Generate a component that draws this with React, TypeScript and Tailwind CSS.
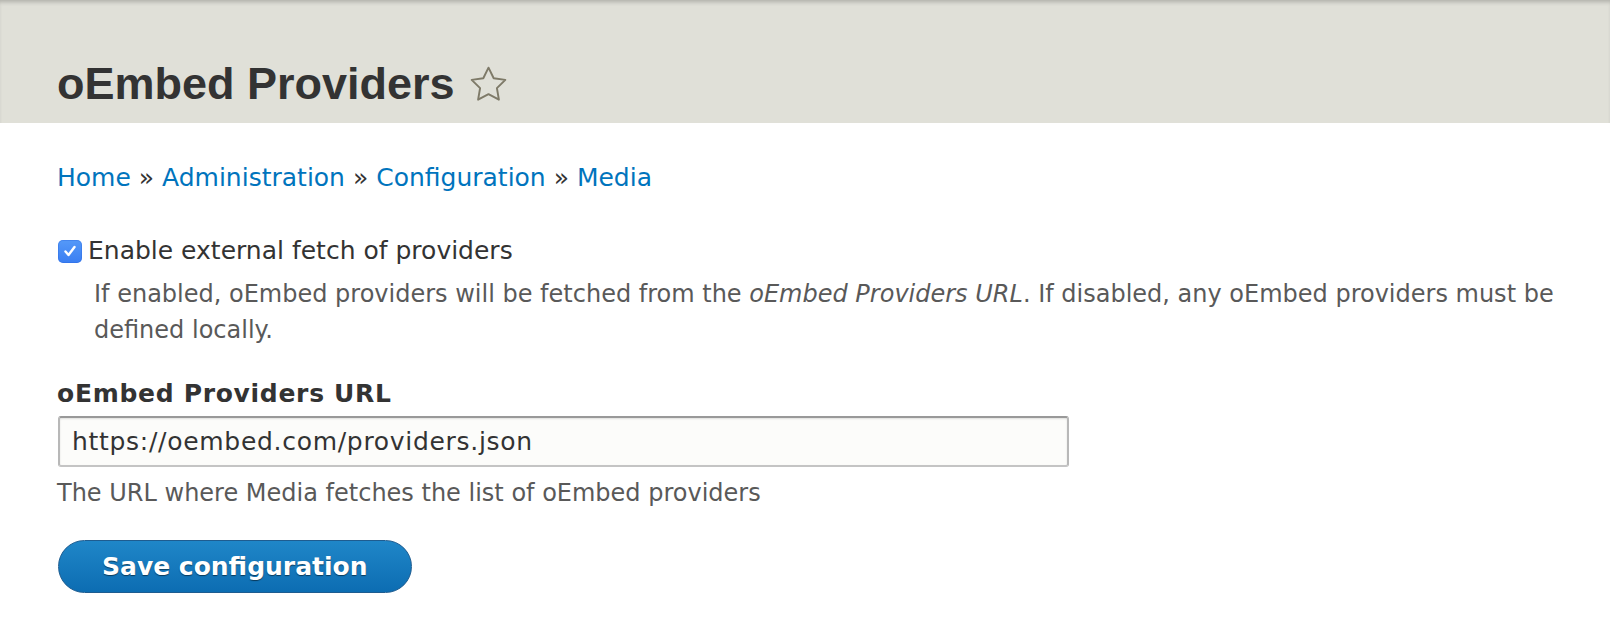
import React from "react";

export default function App() {
  return (
    <div className="min-h-screen bg-white font-['DejaVu_Sans',sans-serif] text-[#333]">
      <header className="h-[123px] bg-[#e0e0d8] pl-[57px] pt-[58px] shadow-[inset_0_4px_4px_-2px_rgba(0,0,0,0.22)]">
        <div className="flex h-[52px] items-center">
          <h1 className="font-['Liberation_Sans',sans-serif] text-[45px] font-bold leading-[52px] text-[#333]">
            oEmbed Providers
          </h1>
          <svg
            className="ml-[15px] mt-[1px]"
            width="37"
            height="37"
            viewBox="1 1 22 22"
            fill="none"
            stroke="#7e7a68"
            strokeWidth="1.15"
            strokeLinejoin="round"
          >
            <path d="M12 2l3.09 6.26L22 9.27l-5 4.87 1.18 6.88L12 17.77l-6.18 3.25L7 14.14 2 9.27l6.91-1.01L12 2z" />
          </svg>
        </div>
      </header>

      <main className="pl-[57px] pr-[57px] pt-[37px] text-[25px] leading-[36px]">
        <nav className="h-[36px] whitespace-nowrap">
          <a className="text-[#0074bd]" href="#">Home</a>
          <span className="text-[#333]"> » </span>
          <a className="text-[#0074bd]" href="#">Administration</a>
          <span className="text-[#333]"> » </span>
          <a className="text-[#0074bd]" href="#">Configuration</a>
          <span className="text-[#333]"> » </span>
          <a className="text-[#0074bd]" href="#">Media</a>
        </nav>

        <div className="mt-[37px]">
          <div className="flex h-[36px] items-center">
            <div className="ml-[1px] flex h-[23px] w-[24px] items-center justify-center rounded-[5px] bg-gradient-to-b from-[#5599f8] to-[#3a7ef2] shadow-[inset_0_0_0_1px_rgba(40,100,220,0.35)]">
              <svg width="16" height="16" viewBox="0 0 16 16" fill="none" stroke="white" strokeWidth="2.4" strokeLinecap="round" strokeLinejoin="round">
                <path d="M3.5 8.5l3 3.5L12.5 4" />
              </svg>
            </div>
            <label className="ml-[6px] text-[#333]">Enable external fetch of providers</label>
          </div>
          <div className="mt-[7px] pl-[37px] text-[24px] text-[#595959]">
            <span className="block whitespace-nowrap">
              If enabled, oEmbed providers will be fetched from the <em>oEmbed Providers URL</em>. If disabled, any oEmbed providers must be
            </span>
            <span className="block">defined locally.</span>
          </div>
        </div>

        <div className="mt-[28px]">
          <div className="font-bold tracking-[0.7px] text-[#333]">oEmbed Providers URL</div>
          <input
            readOnly
            value="https://oembed.com/providers.json"
            className="ml-[1px] mt-[4px] box-border block h-[51px] w-[1011px] rounded-[3px] border-[2px] border-[#b8b8b8] border-t-[#999] border-b-[#c4c4c4] bg-[#fcfcfa] pb-[9px] pl-[12px] pt-[9px] font-['DejaVu_Sans',sans-serif] text-[25px] leading-[29px] tracking-[0.7px] text-[#333] shadow-[inset_0_1px_2px_rgba(0,0,0,0.12)] outline-none"
          />
          <div className="mt-[8px] text-[24px] text-[#595959]">The URL where Media fetches the list of oEmbed providers</div>
        </div>

        <button className="ml-[1px] mt-[29px] flex h-[53px] items-center rounded-full border-[1.5px] border-[#1e5c90] bg-gradient-to-b from-[#1f86c8] to-[#0c6db2] px-[43px] text-[25px] font-bold text-white [text-shadow:0_1px_1px_rgba(0,0,0,0.5)]">
          Save configuration
        </button>
      </main>
    </div>
  );
}
